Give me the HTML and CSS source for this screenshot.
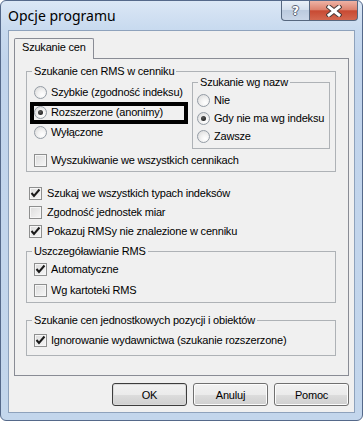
FILE: index.html
```html
<!DOCTYPE html>
<html lang="pl">
<head>
<meta charset="utf-8">
<title>Opcje programu</title>
<link rel="stylesheet" href="styles.css">
</head>
<body>
<div class="window">
  <div class="titlebar">
    <span class="title">Opcje programu</span>
    <div class="caption">
      <div class="cap-btn help"><span class="q">?</span></div>
      <div class="cap-btn close">
        <svg width="16" height="12" viewBox="0 0 16 12">
          <path d="M3 2 L13 10 M13 2 L3 10" stroke="#4a3a38" stroke-width="5" stroke-linecap="square" fill="none"/>
          <path d="M3 2 L13 10 M13 2 L3 10" stroke="#ffffff" stroke-width="3" stroke-linecap="square" fill="none"/>
        </svg>
      </div>
    </div>
  </div>
  <div class="client">
    <div class="tabs"><div class="tab">Szukanie cen</div></div>
    <div class="panel">
      <div class="group g1">
        <div class="legend">Szukanie cen RMS w cenniku</div>
        <div class="g1-top">
          <div class="col-left">
            <div class="row h20"><span class="radio"></span><span class="lbl">Szybkie (zgodność indeksu)</span></div>
            <div class="row h20 marked"><span class="radio on"></span><span class="lbl">Rozszerzone (anonimy)</span><span class="mark"></span></div>
            <div class="row h21"><span class="radio"></span><span class="lbl">Wyłączone</span></div>
          </div>
          <div class="group nested">
            <div class="legend">Szukanie wg nazw</div>
            <div class="nested-body">
              <div class="row h18"><span class="radio"></span><span class="lbl">Nie</span></div>
              <div class="row h18"><span class="radio on"></span><span class="lbl">Gdy nie ma wg indeksu</span></div>
              <div class="row h18"><span class="radio"></span><span class="lbl">Zawsze</span></div>
            </div>
          </div>
        </div>
        <div class="row h18 g1-check"><span class="cb"></span><span class="lbl">Wyszukiwanie we wszystkich cennikach</span></div>
      </div>

      <div class="outer-rows">
        <div class="row h19"><span class="cb on"><svg width="11" height="11" viewBox="0 0 11 11"><path d="M1.5 5 L4 8 L9.5 1.5" stroke="#1a1a1a" stroke-width="2" fill="none"/></svg></span><span class="lbl wide">Szukaj we wszystkich typach indeksów</span></div>
        <div class="row h19"><span class="cb"></span><span class="lbl wide">Zgodność jednostek miar</span></div>
        <div class="row h19"><span class="cb on"><svg width="11" height="11" viewBox="0 0 11 11"><path d="M1.5 5 L4 8 L9.5 1.5" stroke="#1a1a1a" stroke-width="2" fill="none"/></svg></span><span class="lbl wide">Pokazuj RMSy nie znalezione w cenniku</span></div>
      </div>

      <div class="group g2">
        <div class="legend">Uszczegóławianie RMS</div>
        <div class="g2-body">
          <div class="row h21"><span class="cb on"><svg width="11" height="11" viewBox="0 0 11 11"><path d="M1.5 5 L4 8 L9.5 1.5" stroke="#1a1a1a" stroke-width="2" fill="none"/></svg></span><span class="lbl">Automatyczne</span></div>
          <div class="row h21"><span class="cb"></span><span class="lbl">Wg kartoteki RMS</span></div>
        </div>
      </div>

      <div class="group g3">
        <div class="legend">Szukanie cen jednostkowych pozycji i obiektów</div>
        <div class="g3-body">
          <div class="row h18"><span class="cb on"><svg width="11" height="11" viewBox="0 0 11 11"><path d="M1.5 5 L4 8 L9.5 1.5" stroke="#1a1a1a" stroke-width="2" fill="none"/></svg></span><span class="lbl">Ignorowanie wydawnictwa (szukanie rozszerzone)</span></div>
        </div>
      </div>
    </div>
    <div class="buttons">
      <button class="btn default">OK</button>
      <button class="btn">Anuluj</button>
      <button class="btn">Pomoc</button>
    </div>
  </div>
</div>
</body>
</html>
```

FILE: styles.css
```css
html, body {
  margin: 0;
  padding: 0;
  background: #ffffff;
}
body {
  width: 363px;
  height: 421px;
  overflow: hidden;
  font-family: "Liberation Sans", Arial, sans-serif;
  font-size: 11px;
  letter-spacing: -0.2px;
  color: #000;
}
.window {
  box-sizing: border-box;
  width: 363px;
  height: 421px;
  border: 1px solid #55698a;
  border-radius: 6px;
  background: linear-gradient(#dbe7f5 0px, #c8daef 28px, #c1d4ec 60px, #c3d6ec 100%);
  display: flex;
  flex-direction: column;
  padding: 0 7px 7px 7px;
}
.titlebar {
  height: 29px;
  display: flex;
  align-items: flex-start;
  flex-shrink: 0;
}
.title {
  font-family: "Noto Sans", "Liberation Sans", sans-serif;
  font-size: 14px;
  letter-spacing: 0;
  line-height: 18px;
  margin-top: 6px;
  color: #000;
}
.caption {
  margin-left: auto;
  margin-right: -3px;
  display: flex;
}
.cap-btn {
  box-sizing: border-box;
  height: 20px;
  border: 1px solid #56677f;
  border-top: none;
  display: flex;
  align-items: center;
  justify-content: center;
}
.help {
  width: 29px;
  border-radius: 0 0 0 4px;
  background: linear-gradient(#e9f0f8 0%, #d4dfed 45%, #bccbdf 50%, #c9d6e8 100%);
}
.q {
  font-family: "DejaVu Sans", sans-serif;
  font-weight: bold;
  font-size: 12px;
  line-height: 14px;
  letter-spacing: 0;
  color: #fff;
  text-shadow: 1px 0 0 #5a6578, -1px 0 0 #5a6578, 0 1px 0 #5a6578, 0 -1px 0 #5a6578;
}
.close {
  width: 49px;
  margin-left: -1px;
  border-radius: 0 0 4px 0;
  background: linear-gradient(#eeb3a5 0%, #dd8470 45%, #c84a33 52%, #d3674f 100%);
}
.client {
  flex: 1;
  box-sizing: border-box;
  border: 1px solid #8ea2bc;
  background: #f0f0f0;
  display: flex;
  flex-direction: column;
  padding: 7px 5px 6px 5px;
}
.tabs {
  display: flex;
  height: 20px;
  position: relative;
  z-index: 1;
}
.tab {
  box-sizing: border-box;
  height: 21px;
  border: 1px solid #898c95;
  border-bottom: none;
  border-radius: 2px 2px 0 0;
  background: #f0f0f0;
  padding: 2px 7px 0 7px;
  line-height: 13px;
}
.panel {
  box-sizing: border-box;
  height: 318px;
  border: 1px solid #898c95;
  background: #f0f0f0;
  padding: 0 12px 0 11px;
  display: flex;
  flex-direction: column;
}
.group {
  border: 1px solid #aeb2b6;
}
.legend {
  display: table;
  margin: -7px 0 0 5px;
  padding: 0 2px;
  background: #f0f0f0;
  line-height: 13px;
  height: 13px;
  white-space: nowrap;
}
.g1 {
  margin-top: 12px;
  padding-bottom: 2px;
}
.g1-top {
  display: flex;
}
.col-left {
  padding: 4px 0 0 7px;
}
.nested {
  box-sizing: border-box;
  width: 138px;
  margin: 4px 5px 0 auto;
}
.nested-body {
  padding: 2px 0 3px 4px;
}
.g1-check {
  margin-top: 2px;
  padding-left: 7px;
}
.row {
  display: flex;
  align-items: center;
  white-space: nowrap;
  position: relative;
}
.h18 { height: 18px; }
.h19 { height: 19px; }
.h20 { height: 20px; }
.h21 { height: 21px; }
.lbl {
  margin-left: 4px;
  line-height: 13px;
}
.lbl.wide {
  margin-left: 5px;
}
.radio {
  box-sizing: border-box;
  width: 13px;
  height: 13px;
  border-radius: 50%;
  border: 1px solid #949ca5;
  background: radial-gradient(circle at 65% 70%, #ffffff 0%, #f4f4f4 35%, #d6d6d6 100%);
  display: flex;
  align-items: center;
  justify-content: center;
  flex-shrink: 0;
}
.radio.on::after {
  content: "";
  width: 5px;
  height: 5px;
  border-radius: 50%;
  background: radial-gradient(circle at 40% 35%, #5a5a5a, #101010);
}
.cb {
  box-sizing: border-box;
  width: 13px;
  height: 13px;
  border: 1px solid #8e8f8f;
  box-shadow: inset 0 0 0 1px #f6f6f6;
  background: linear-gradient(135deg, #dcdcdc 0%, #f6f6f6 100%);
  display: flex;
  align-items: center;
  justify-content: center;
  flex-shrink: 0;
}
.mark {
  position: absolute;
  left: -4px;
  top: 0;
  width: 158px;
  height: 22px;
  box-sizing: border-box;
  border: 4px solid #000;
}
.outer-rows {
  margin-top: 12px;
  padding-left: 3px;
}
.g2 {
  margin-top: 10px;
}
.g2-body {
  padding: 1px 0 1px 7px;
}
.g3 {
  margin-top: 17px;
}
.g3-body {
  padding: 4px 0 6px 7px;
}
.buttons {
  display: flex;
  justify-content: flex-end;
  gap: 6px;
  margin-top: 7px;
}
.btn {
  box-sizing: border-box;
  width: 75px;
  height: 23px;
  margin: 0;
  padding: 0;
  font-family: "Liberation Sans", Arial, sans-serif;
  font-size: 11px;
  letter-spacing: -0.2px;
  color: #000;
  border: 1px solid #707070;
  border-radius: 3px;
  background: linear-gradient(#f2f2f2 0%, #ebebeb 50%, #dddddd 51%, #cfcfcf 100%);
  box-shadow: inset 0 0 0 1px #fcfcfc;
}
.btn.default {
  border-color: #3d3d3d;
  box-shadow: inset 0 0 0 1px #d9d9d9;
}
```
